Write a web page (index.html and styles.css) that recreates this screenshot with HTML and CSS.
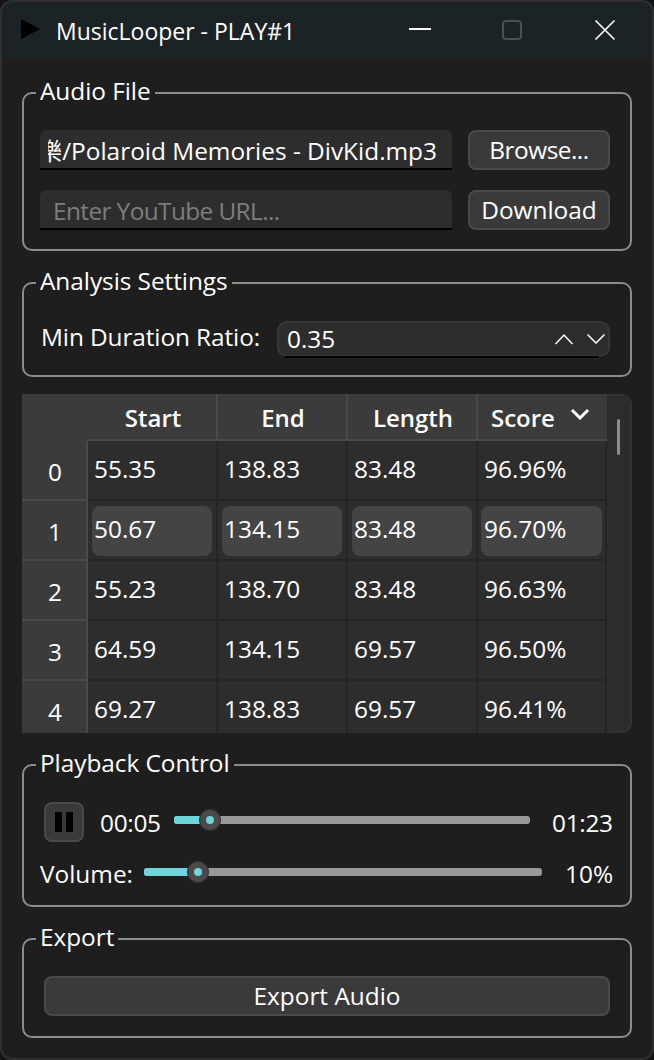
FILE: index.html
```html
<!DOCTYPE html>
<html lang="en">

<head>
  <meta charset="UTF-8">
  <title>MusicLooper - PLAY#1</title>
  <link rel="stylesheet" href="styles.css">
</head>

<body>
  <div class="window">
    <div class="titlebar">
      <svg class="app-icon" width="20" height="20" viewBox="0 0 20 20"><path d="M1 0 L20 10 L1 20 Z" fill="#000" /></svg>
      <span class="title">MusicLooper - PLAY#1</span>
      <svg class="win-btn min" width="22" height="22" viewBox="0 0 22 22"><path d="M0 9 H22" stroke="#fff" stroke-width="2" /></svg>
      <svg class="win-btn max" width="22" height="22" viewBox="0 0 22 22"><rect x="2" y="2" width="18" height="18" rx="3" fill="none" stroke="#4a4f52" stroke-width="2" /></svg>
      <svg class="win-btn close" width="22" height="22" viewBox="0 0 22 22"><path d="M1.5 1.5 L20.5 20.5 M20.5 1.5 L1.5 20.5" stroke="#fff" stroke-width="1.6" /></svg>
    </div>

    <div class="content">
      <fieldset class="group audio-group">
        <legend>Audio File</legend>
        <div class="rows audio-rows">
          <div class="row">
            <div class="line-edit"><div class="clip"><span class="path">樂/Polaroid Memories - DivKid.mp3</span></div></div>
            <div class="btn side-btn browse">Browse...</div>
          </div>
          <div class="row">
            <div class="line-edit placeholder"><div class="clip">Enter YouTube URL...</div></div>
            <div class="btn side-btn">Download</div>
          </div>
        </div>
      </fieldset>

      <fieldset class="group analysis-group">
        <legend>Analysis Settings</legend>
        <div class="rows analysis-rows">
          <div class="row ratio-row">
            <span class="ratio-label">Min Duration Ratio:</span>
            <div class="spin">
              <span class="spin-value">0.35</span>
              <svg width="18" height="12" viewBox="0 0 18 12"><path d="M0.5 11 L9 2 L17.5 11" fill="none" stroke="#fff" stroke-width="1.5" /></svg>
              <svg width="18" height="12" viewBox="0 0 18 12"><path d="M0.5 1.5 L9 10 L17.5 1.5" fill="none" stroke="#fff" stroke-width="1.5" /></svg>
            </div>
          </div>
        </div>
      </fieldset>

      <div class="table-box">
        <div class="table-clip">
          <table class="results">
            <thead>
              <tr>
                <th class="corner"></th>
                <th>Start</th>
                <th>End</th>
                <th>Length</th>
                <th class="score-head">
                  <span>Score</span>
                  <svg class="sort" width="20" height="12" viewBox="0 0 20 12"><path d="M2 2 L10 10 L18 2" fill="none" stroke="#fff" stroke-width="3" /></svg>
                </th>
              </tr>
            </thead>
            <tbody>
              <tr><th>0</th><td>55.35</td><td>138.83</td><td>83.48</td><td>96.96%</td></tr>
              <tr class="selected"><th>1</th><td><span>50.67</span></td><td><span>134.15</span></td><td><span>83.48</span></td><td><span>96.70%</span></td></tr>
              <tr><th>2</th><td>55.23</td><td>138.70</td><td>83.48</td><td>96.63%</td></tr>
              <tr><th>3</th><td>64.59</td><td>134.15</td><td>69.57</td><td>96.50%</td></tr>
              <tr><th>4</th><td>69.27</td><td>138.83</td><td>69.57</td><td>96.41%</td></tr>
            </tbody>
          </table>
        </div>
        <div class="scrollbar"><div class="thumb"></div></div>
      </div>

      <fieldset class="group playback-group">
        <legend>Playback Control</legend>
        <div class="rows playback-rows">
          <div class="row player-row">
            <div class="btn pause">
              <svg width="18" height="20" viewBox="0 0 18 20"><path d="M0 0 H7 V20 H0 Z M11 0 H18 V20 H11 Z" fill="#000" /></svg>
            </div>
            <span class="time">00:05</span>
            <div class="slider">
              <div class="fill" style="width: 36px"></div>
              <div class="knob"></div>
            </div>
            <span class="time">01:23</span>
          </div>
          <div class="row volume-row">
            <span class="volume-label">Volume:</span>
            <div class="slider">
              <div class="fill" style="width: 54px"></div>
              <div class="knob"></div>
            </div>
            <span class="percent">10%</span>
          </div>
        </div>
      </fieldset>

      <fieldset class="group">
        <legend>Export</legend>
        <div class="rows export-rows">
          <div class="btn export-btn">Export Audio</div>
        </div>
      </fieldset>
    </div>
  </div>
</body>

</html>
```
FILE: styles.css
```css
* {
  box-sizing: border-box;
}

html,
body {
  margin: 0;
  height: 100%;
  background: #141414;
}

body {
  font-family: "Open Sans", "Noto Sans CJK TC", sans-serif;
  font-size: 24.4px;
  color: #fff;
}

.window {
  width: 654px;
  height: 1060px;
  background: #1e1e1e;
  border: 2px solid #303030;
  border-radius: 12px;
  overflow: hidden;
  display: flex;
  flex-direction: column;
}

.titlebar {
  height: 56px;
  flex: none;
  background: #1c2326;
  display: flex;
  align-items: center;
  padding-left: 18px;
}

.app-icon {
  margin-bottom: 2px;
}

.title {
  margin-left: 16px;
  width: 353px;
  margin-top: 2px;
  font-size: 23px;
}

.win-btn {
  flex: none;
}

.min {
  margin-top: 2px;
}

.max {
  margin-left: 70px;
}

.close {
  margin-left: 71px;
}

.content {
  padding: 20px 20px 0;
  display: flex;
  flex-direction: column;
  gap: 17px;
}

.group {
  margin: 0;
  padding: 0 20px 20px 16px;
  border: 2px solid #8c8c8c;
  border-radius: 10px;
  min-width: 0;
}

.audio-group {
  padding-bottom: 19px;
}

.analysis-group {
  padding-bottom: 18px;
}

.playback-group {
  padding-bottom: 17px;
}

legend {
  margin-left: -4px;
  padding: 0 4px 4px;
  line-height: 26px;
  letter-spacing: -0.05px;
}

.rows {
  display: flex;
  flex-direction: column;
}

.audio-rows {
  padding-top: 22px;
  gap: 20px;
}

.analysis-rows {
  padding-top: 23px;
}

.playback-rows {
  padding-top: 22px;
}

.export-rows {
  padding: 22px 0 0 4px;
}

.row {
  display: flex;
  align-items: center;
}

.line-edit {
  width: 412px;
  height: 40px;
  background: #2d2d2d;
  border-radius: 6px 6px 0 0;
  border-bottom: 2px solid #000;
  padding: 1px 15px 0 8px;
  display: flex;
  align-items: center;
}

.clip {
  flex: 1;
  min-width: 0;
  overflow: hidden;
  white-space: nowrap;
  display: flex;
  justify-content: flex-end;
}

.placeholder {
  color: #7d7d7d;
  padding: 3px 15px 0 13px;
  letter-spacing: -0.6px;
}

.placeholder .clip {
  justify-content: flex-start;
}

.btn {
  height: 40px;
  background: #3a3a3a;
  border: 2px solid #4a4a4a;
  border-radius: 8px;
  display: flex;
  align-items: center;
  justify-content: center;
}

.side-btn {
  width: 142px;
  margin-left: 16px;
  padding-bottom: 2px;
}

.browse {
  letter-spacing: -0.5px;
}

.ratio-label {
  margin-left: 1px;
  width: 236px;
  line-height: 28px;
  padding-bottom: 4px;
  letter-spacing: -0.1px;
}

.spin {
  width: 333px;
  height: 36px;
  background: #2d2d2d;
  border: 2px solid #383838;
  border-radius: 10px;
  display: flex;
  align-items: center;
  gap: 14px;
  padding: 0 3px 0 8px;
  position: relative;
}

/* underline sits over the bottom edge of the box */
.spin::after {
  content: "";
  position: absolute;
  left: 6px;
  right: 9px;
  bottom: -3px;
  height: 2px;
  background: #000;
}

.spin-value {
  flex: 1;
  line-height: 30px;
}

.table-box {
  height: 339px;
  display: flex;
}

.table-clip {
  width: 585px;
  flex: none;
  overflow: hidden;
}

.results {
  border-collapse: separate;
  border-spacing: 0;
  table-layout: fixed;
  width: 585px;
}

.results th,
.results td {
  padding: 0;
  font-weight: 400;
}

.results thead th {
  height: 47px;
  background: #3b3b3b;
  border-bottom: 2px solid #4a4a4a;
  border-right: 2px solid #4a4a4a;
  width: 130px;
  padding: 1px 0 0 2px;
  font-size: 24px;
  font-weight: 600;
  text-align: center;
}

.results thead .corner {
  width: 66px;
  border-right: 0;
  border-bottom: 0;
}

.results thead .score-head {
  width: 129px;
  border-right: 0;
  position: relative;
  text-align: left;
  padding-left: 13px;
}

.sort {
  position: absolute;
  right: 17px;
  top: 14px;
}

.results tbody th {
  height: 60px;
  background: #3b3b3b;
  border-bottom: 2px solid #4a4a4a;
  border-right: 2px solid #4a4a4a;
  padding: 2px 0 0 2px;
}

.results td {
  background: #2d2d2d;
  border-right: 2px solid #252525;
  border-bottom: 2px solid #252525;
  padding: 0 0 3px 6px;
}

.results .selected td {
  padding: 5px 4px 3px 4px;
}

.results .selected td:last-child {
  padding: 5px 3px 3px 3px;
}

.selected td span {
  display: flex;
  align-items: center;
  height: 50px;
  background: #444;
  border-radius: 8px;
  padding: 0 0 6px 2px;
}

.selected td:last-child span {
  padding-left: 3px;
}

.scrollbar {
  flex: 1;
  display: flex;
  justify-content: center;
  padding-top: 23px;
  background: #2c2c2c;
  border: 2px solid #333;
  border-left: 0;
  border-radius: 0 10px 10px 0;
}

.thumb {
  width: 3px;
  height: 36px;
  background: #8c8c8c;
  border-radius: 2px;
}

.player-row {
  padding-left: 4px;
}

.pause {
  width: 40px;
  flex: none;
  margin-right: 16px;
}

.time {
  flex: none;
  width: 60px;
  white-space: nowrap;
  letter-spacing: -0.3px;
}

.slider {
  height: 8px;
  background: #999;
  border-radius: 3px;
  position: relative;
  flex: none;
}

.player-row .slider {
  width: 356px;
  margin: 0 22px 4px 14px;
}

.volume-row {
  height: 30px;
  margin-top: 16px;
}

.volume-label {
  width: 104px;
  flex: none;
}

.volume-row .slider {
  width: 398px;
  margin-right: 23px;
  margin-bottom: 2px;
}

.percent {
  flex: none;
  white-space: nowrap;
}

.fill {
  height: 8px;
  background: #6fd5dc;
  border-radius: 3px 0 0 3px;
}

/* drag handle sits on top of the track */
.knob {
  position: absolute;
  top: -6px;
  width: 20px;
  height: 20px;
  border-radius: 50%;
  background: #6fd5dc;
  border: 6px solid #4a4a4a;
  box-shadow: 0 0 0 1px #333;
}

.player-row .knob {
  left: 26px;
}

.volume-row .knob {
  left: 44px;
}

.export-btn {
  width: 566px;
  padding-bottom: 2px;
}
```
